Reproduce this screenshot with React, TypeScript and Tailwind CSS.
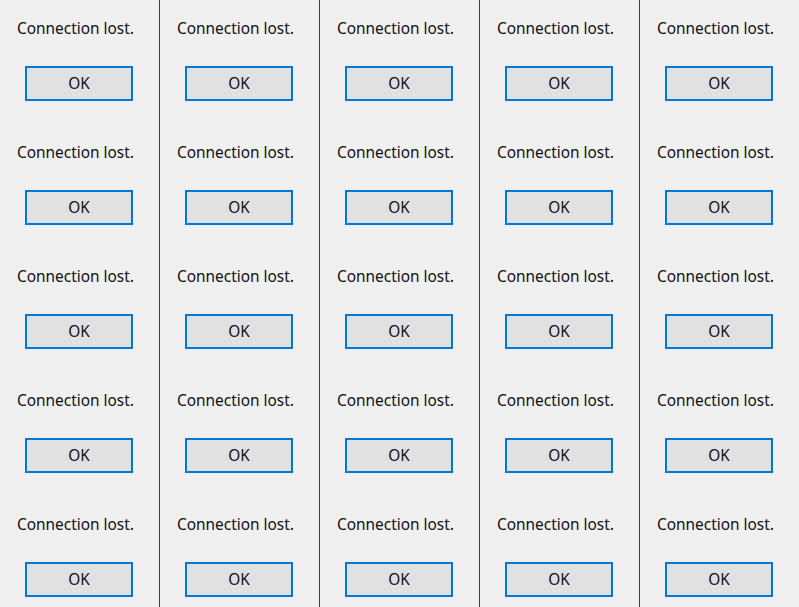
import React from "react";

const columns = [0, 1, 2, 3, 4];
const rows = [0, 1, 2, 3, 4];

const Dialog = () => {
  return (
    <div className="h-[124px] shrink-0 pl-[17px] pt-[20px]">
      <p className="h-[18px] text-[15.4px] leading-[18px] text-[#111] whitespace-nowrap">
        Connection lost.
      </p>
      <button
        type="button"
        className="mt-[28px] ml-[8px] flex h-[35px] w-[108px] items-center justify-center border-2 border-[#0078d7] bg-[#e1e1e1] text-[15.4px] leading-none text-[#111]"
      >
        OK
      </button>
    </div>
  );
};

const App = () => {
  return (
    <div
      className="flex h-[607px] w-[799px] overflow-hidden bg-[#f0f0f0]"
      style={{ fontFamily: '"Noto Sans", "Open Sans", sans-serif' }}
    >
      {columns.map((col) => (
        <div
          key={col}
          className={
            col < 4
              ? "flex w-[160px] shrink-0 flex-col border-r border-[#3c3c3c]"
              : "flex w-[159px] shrink-0 flex-col"
          }
        >
          {rows.map((row) => (
            <Dialog key={row} />
          ))}
        </div>
      ))}
    </div>
  );
};

export default App;
